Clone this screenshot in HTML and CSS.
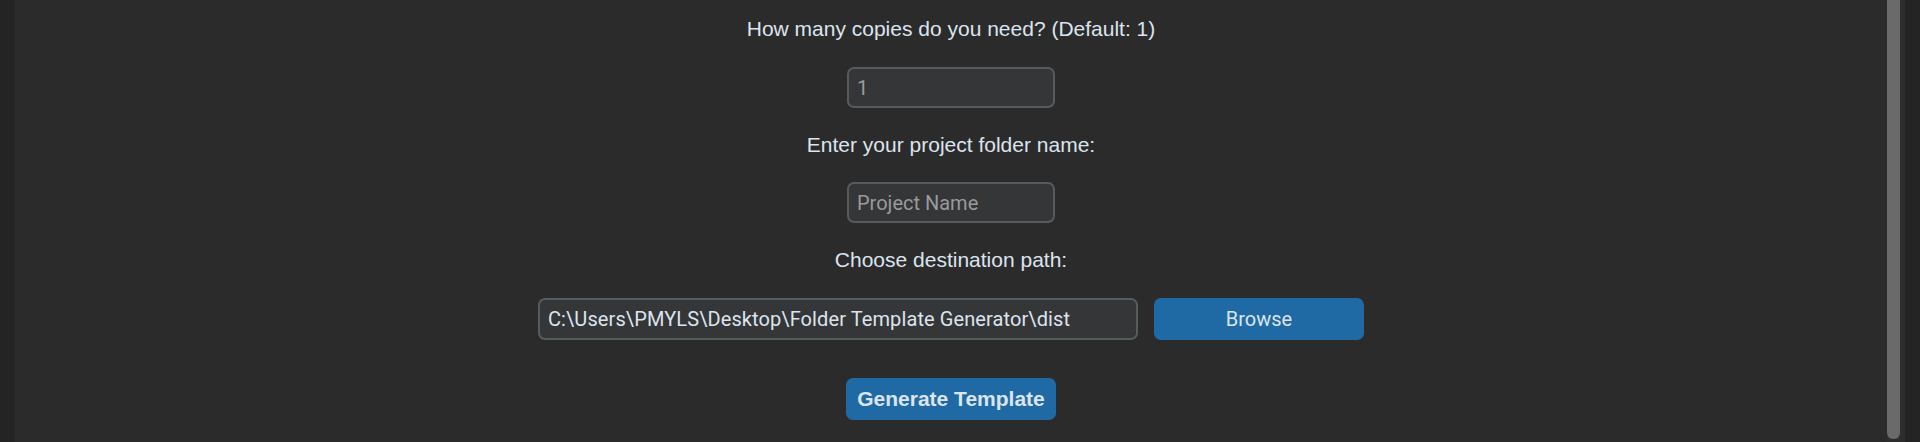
FILE: index.html
```html
<!DOCTYPE html>
<html>
<head>
<meta charset="utf-8">
<link rel="stylesheet" href="styles.css">
</head>
<body>
<div class="app">
  <div class="edge"></div>
  <main class="content">
    <div class="form">
      <div class="label l1">How many copies do you need? (Default: 1)</div>
      <div class="entry small placeholder i1">1</div>
      <div class="label l2">Enter your project folder name:</div>
      <div class="entry small placeholder i2">Project Name</div>
      <div class="label l3">Choose destination path:</div>
      <div class="path-row">
        <div class="entry wide">C:\Users\PMYLS\Desktop\Folder Template Generator\dist</div>
        <button class="btn browse">Browse</button>
      </div>
      <button class="btn generate">Generate Template</button>
    </div>
  </main>
  <div class="track"><div class="thumb"></div></div>
  <div class="edge"></div>
</div>
</body>
</html>
```

FILE: styles.css
```css
html, body {
  margin: 0;
  padding: 0;
  height: 100%;
  background: #2b2b2b;
  overflow: hidden;
}
.app {
  display: flex;
  height: 442px;
}
.edge {
  width: 15px;
  background: #242424;
  flex: none;
}
.content {
  flex: 1;
  display: flex;
  justify-content: center;
}
.track {
  width: 18px;
  flex: none;
  background: #2d2d2d;
  display: flex;
  justify-content: flex-start;
}
.thumb {
  width: 13px;
  height: 439px;
  background: #6a6a6a;
  border-radius: 0 0 6px 6px;
}
.form {
  display: flex;
  flex-direction: column;
  align-items: center;
}
.label {
  font-family: "Liberation Sans", Arial, sans-serif;
  font-size: 21px;
  color: #dce4ee;
  line-height: 24px;
}
.l1 { margin-top: 17px; }
.l2 { margin-top: 25px; }
.l3 { margin-top: 25px; }
.entry {
  box-sizing: border-box;
  height: 41px;
  border: 2px solid #565b5e;
  background: #343638;
  border-radius: 7px;
  font-family: Roboto, sans-serif;
  font-size: 20px;
  color: #dce4ee;
  display: flex;
  align-items: center;
  padding: 0 8px;
  white-space: nowrap;
}
.placeholder { color: #9a9a9a; }
.small { width: 208px; }
.i1 { margin-top: 26px; }
.i2 { margin-top: 25px; }
.path-row {
  display: flex;
  gap: 16px;
  margin-top: 26px;
}
.wide {
  width: 600px;
  height: 42px;
  letter-spacing: 0.1px;
}
.btn {
  box-sizing: border-box;
  width: 210px;
  height: 42px;
  border: none;
  border-radius: 7px;
  background: #1f6aa5;
  color: #dce4ee;
  padding: 0;
}
.browse {
  font-family: Roboto, sans-serif;
  font-size: 20px;
}
.generate {
  margin-top: 38px;
  font-family: "Liberation Sans", Arial, sans-serif;
  font-weight: bold;
  font-size: 21px;
}
```
